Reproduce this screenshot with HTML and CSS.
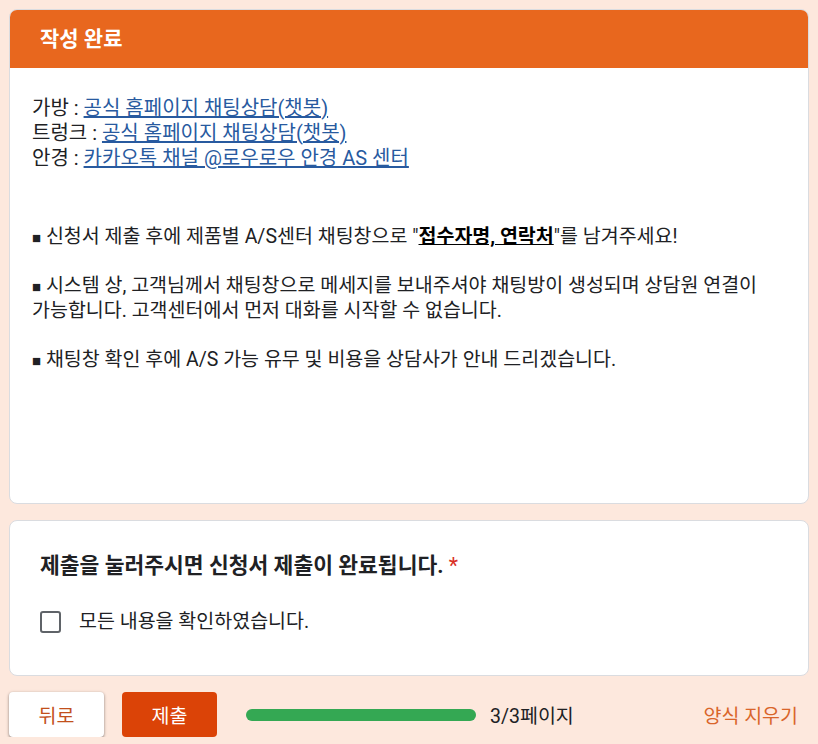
FILE: index.html
```html
<!DOCTYPE html>
<html lang="ko">
<head>
    <meta charset="UTF-8">
    <meta name="viewport" content="width=device-width, initial-scale=1.0">
    <title>작성 완료</title>
    <link rel="stylesheet" href="styles.css">
</head>
<body>
    <div class="form">
        <div class="card">
            <div class="card-header">작성 완료</div>
            <div class="card-body">
                <div class="links">
                    가방 : <a href="#">공식 홈페이지 채팅상담(챗봇)</a><br>
                    트렁크 : <a href="#">공식 홈페이지 채팅상담(챗봇)</a><br>
                    안경 : <a href="#">카카오톡 채널 @로우로우 안경 AS 센터</a>
                </div>
                <p class="note"><span class="sq">■</span> 신청서 제출 후에 제품별 A/S센터 채팅창으로 "<b><u>접수자명, 연락처</u></b>"를 남겨주세요!</p>
                <p class="note"><span class="sq">■</span> 시스템 상, 고객님께서 채팅창으로 메세지를 보내주셔야 채팅방이 생성되며 상담원 연결이 가능합니다. 고객센터에서 먼저 대화를 시작할 수 없습니다.</p>
                <p class="note"><span class="sq">■</span> 채팅창 확인 후에 A/S 가능 유무 및 비용을 상담사가 안내 드리겠습니다.</p>
            </div>
        </div>

        <div class="card question">
            <div class="question-title">제출을 눌러주시면 신청서 제출이 완료됩니다. <span class="required">*</span></div>
            <label class="check">
                <span class="box"></span>
                <span>모든 내용을 확인하였습니다.</span>
            </label>
        </div>

        <div class="footer">
            <button type="button" class="btn back">뒤로</button>
            <button type="button" class="btn submit">제출</button>
            <div class="progress"><div class="progress-fill" style="width: 100%"></div></div>
            <span class="page-count">3/3페이지</span>
            <a href="#" class="clear">양식 지우기</a>
        </div>
    </div>
</body>
</html>
```

FILE: styles.css
```css
body {
    margin: 0;
    padding: 9px 9px 0;
    background-color: #fde8dd;
    font-family: Roboto, "Noto Sans CJK KR", Arial, sans-serif;
    color: #202124;
}
.form {
    display: flex;
    flex-direction: column;
    gap: 16px;
}
.card {
    background-color: #fff;
    border: 1px solid #dadce0;
    border-radius: 8px;
    overflow: hidden;
}
.card-header {
    background-color: #e8671e;
    color: #fff;
    font-size: 21px;
    font-weight: 700;
    height: 58px;
    line-height: 58px;
    padding-left: 30px;
}
.card-body {
    padding: 28px 22px 131px;
    font-size: 19.5px;
    line-height: 25px;
    word-break: keep-all;
}
.links {
    font-size: 20px;
}
.links a {
    color: #285a9f;
}
.note {
    margin: 0;
    line-height: 25px;
}
.links + .note {
    margin-top: 53px;
}
.note + .note {
    margin-top: 24px;
}
.note b {
    color: #000;
}
.sq {
    font-family: "Liberation Sans", sans-serif;
    font-size: 15px;
    line-height: 1;
}
.question {
    padding: 33px 30px 41px;
}
.question-title {
    font-size: 21.5px;
    font-weight: 700;
    line-height: 24px;
}
.required {
    color: #d93025;
    font-weight: 400;
}
.check {
    display: flex;
    align-items: center;
    gap: 18px;
    margin-top: 32px;
    font-size: 19.5px;
    line-height: 24px;
}
.box {
    width: 17px;
    height: 18px;
    border: 2px solid #5f6368;
    border-radius: 3px;
}
.footer {
    display: flex;
    align-items: center;
}
.btn {
    width: 95px;
    height: 45px;
    border: none;
    border-radius: 4px;
    font-family: inherit;
    font-size: 19.5px;
}
.back {
    background-color: #fff;
    color: #c2501c;
    box-shadow: 0 1px 2px rgba(0,0,0,0.3), 0 1px 3px 1px rgba(0,0,0,0.15);
}
.submit {
    background-color: #db4307;
    color: #fff;
    margin-left: 18px;
}
.progress {
    width: 230px;
    height: 12px;
    margin-left: 29px;
    border-radius: 6px;
    background-color: #e0e0e0;
}
.progress-fill {
    height: 100%;
    border-radius: 6px;
    background-color: #34a853;
}
.page-count {
    margin-left: 14px;
    font-size: 19.5px;
    color: #202124;
}
.clear {
    margin-left: auto;
    margin-right: 11px;
    color: #d9652a;
    text-decoration: none;
    font-size: 19.5px;
}
```
